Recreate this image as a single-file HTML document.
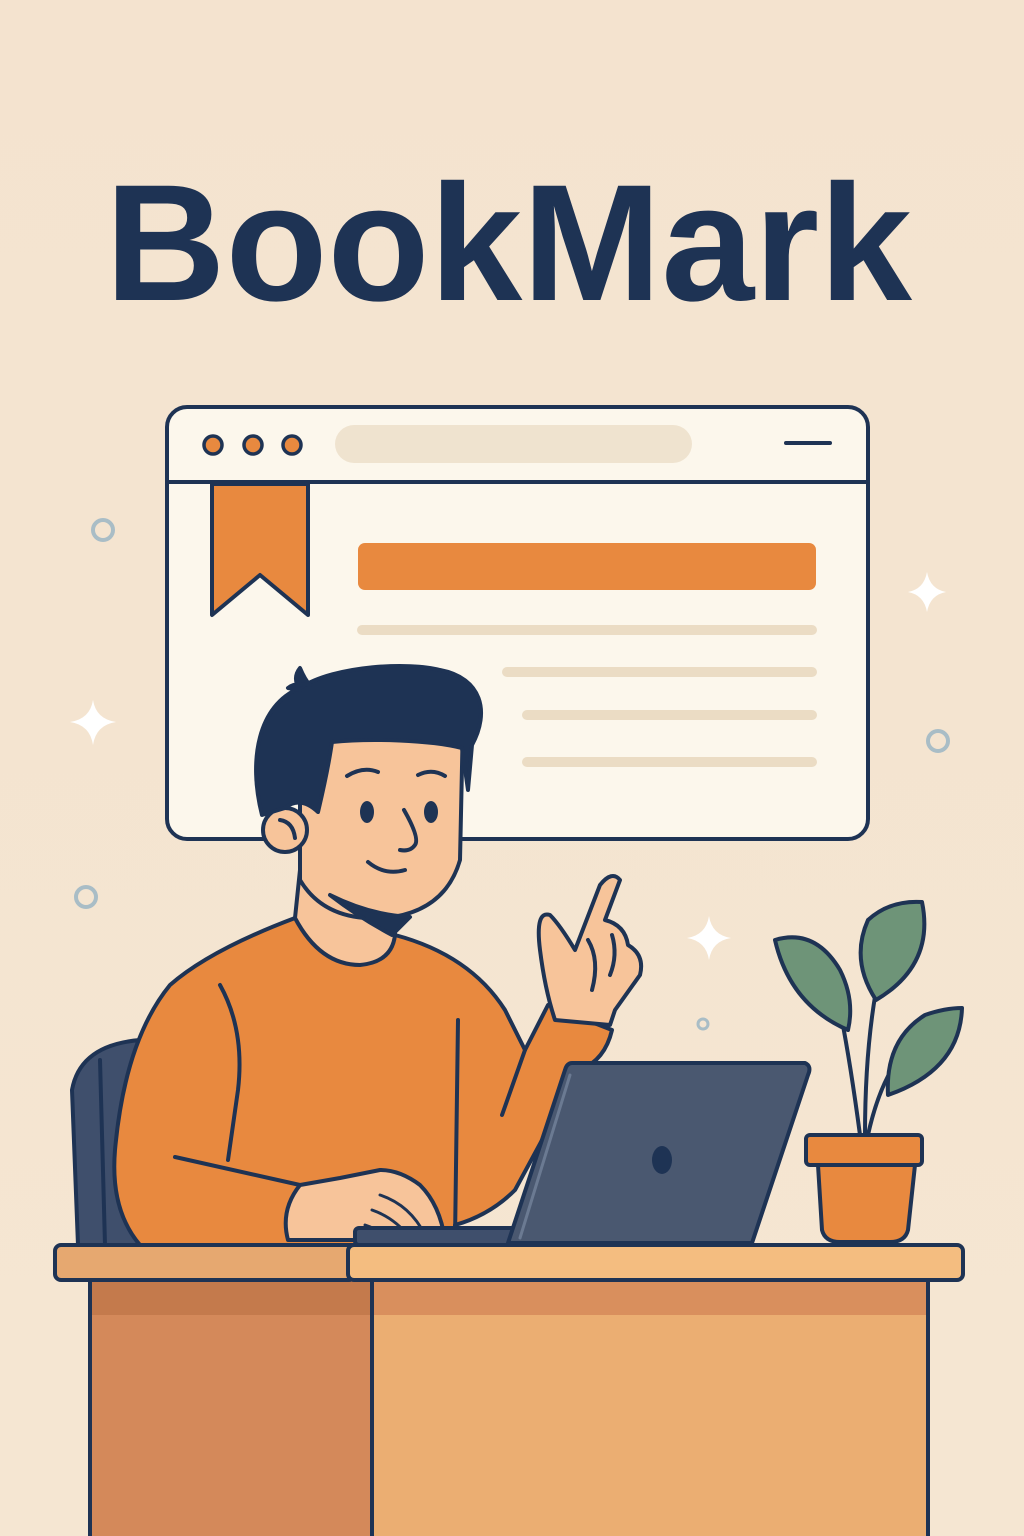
<!DOCTYPE html>
<html><head><meta charset="utf-8"><style>
html,body{margin:0;padding:0;background:#f5e5d1}
svg{display:block}
</style></head><body>
<svg width="1024" height="1536" viewBox="0 0 1024 1536" xmlns="http://www.w3.org/2000/svg">
<defs><linearGradient id="bg" x1="0" y1="0" x2="0" y2="1"><stop offset="0" stop-color="#f4e3cf"/><stop offset="1" stop-color="#f5e6d2"/></linearGradient></defs>
<rect width="1024" height="1536" fill="url(#bg)"/>
<text x="105" y="300" font-family="Liberation Sans, sans-serif" font-weight="bold" font-size="166" fill="#1e3354" textLength="807" lengthAdjust="spacingAndGlyphs">BookMark</text>

<g stroke="#1e3354" stroke-width="4" stroke-linejoin="round" stroke-linecap="round">
<rect x="167" y="407" width="701" height="432" rx="20" fill="#fcf7ec"/>
<line x1="169" y1="482" x2="866" y2="482"/>
<circle cx="213" cy="445" r="9" fill="#e8893f" stroke-width="3.5"/>
<circle cx="253" cy="445" r="9" fill="#e8893f" stroke-width="3.5"/>
<circle cx="292" cy="445" r="9" fill="#e8893f" stroke-width="3.5"/>
<line x1="786" y1="443" x2="830" y2="443"/>
<path d="M212 484 L308 484 L308 615 L260 575 L212 615 Z" fill="#e8893f"/>
</g>
<rect x="335" y="425" width="357" height="38" rx="19" fill="#efe3cf"/>
<rect x="358" y="543" width="458" height="47" rx="7" fill="#e8893f"/>
<g stroke="#ebdcc4" stroke-width="10" stroke-linecap="round">
<line x1="362" y1="630" x2="812" y2="630"/>
<line x1="507" y1="672" x2="812" y2="672"/>
<line x1="527" y1="715" x2="812" y2="715"/>
<line x1="527" y1="762" x2="812" y2="762"/>
</g>

<g fill="#fff">
<path d="M927 572 Q930 589 946 592 Q930 595 927 612 Q924 595 908 592 Q924 589 927 572Z"/>
<path d="M93 700 Q96 719 116 722 Q96 725 93 745 Q90 725 70 722 Q90 719 93 700Z"/>
<path d="M709 916 Q712 935 731 938 Q712 941 709 960 Q706 941 687 938 Q706 935 709 916Z"/>
</g>
<g fill="none" stroke="#a9bdc6" stroke-width="4">
<circle cx="103" cy="530" r="10"/><circle cx="938" cy="741" r="10"/><circle cx="86" cy="897" r="10"/><circle cx="703" cy="1024" r="5" stroke-width="3"/>
</g>

<g stroke="#1e3354" stroke-width="4" stroke-linejoin="round" stroke-linecap="round">
<path d="M140 1040 Q80 1045 72 1090 L78 1245 L140 1245 Z" fill="#3f4f6c"/>
<path d="M100 1060 L105 1245" fill="none"/>
<path d="M140 1245 Q110 1210 115 1150 Q125 1040 170 985 Q210 950 295 918 L395 935 Q470 955 505 1010 L525 1050 L548 1005 L612 1030 Q605 1060 580 1070 L515 1190 Q490 1215 455 1225 L455 1245 Z" fill="#e8893f"/>
<path d="M220 985 Q245 1030 238 1090 L228 1160" fill="none"/>
<path d="M458 1020 L455 1240" fill="none"/>
<path d="M525 1050 L502 1115" fill="none"/>
<path d="M300 870 L295 918 Q320 965 360 965 Q392 962 395 935 L395 900 Z" fill="#f7c49a"/>
<path d="M300 720 L300 880 Q325 922 385 918 Q445 912 460 860 L463 720 Z" fill="#f7c49a"/>
<path d="M330 895 Q360 918 392 935 Q402 925 410 917 Q370 915 330 895Z" fill="#1e3354"/>
<circle cx="285" cy="830" r="22" fill="#f7c49a"/>
<path d="M280 820 Q293 822 295 838" fill="none"/>
<path d="M262 815 C248 760 258 705 300 688 C335 665 410 662 440 670 C482 678 490 712 472 745 L468 790 L462 748 C430 740 370 738 332 742 C328 770 322 795 318 812 Q300 795 285 808 Z" fill="#1e3354"/>
<path d="M300 690 Q292 678 300 668 Q305 680 310 685 Q295 682 288 688Z" fill="#1e3354"/>
<path d="M347 776 Q363 766 378 772 M418 775 Q432 768 445 776" fill="none"/>
<ellipse cx="367" cy="812" rx="7" ry="11" fill="#1e3354" stroke="none"/>
<ellipse cx="431" cy="812" rx="7" ry="11" fill="#1e3354" stroke="none"/>
<path d="M404 810 Q420 838 415 845 Q410 852 400 850" fill="none"/>
<path d="M368 862 Q385 876 405 870" fill="none"/>
<path d="M555 1020 Q545 990 540 950 Q535 910 550 915 Q560 925 575 950 L600 885 Q612 870 620 880 L605 920 Q625 925 628 945 Q645 955 640 975 L615 1010 L610 1025 Z" fill="#f7c49a"/>
<path d="M588 940 Q600 960 592 990 M612 935 Q618 955 610 975" fill="none"/>
<path d="M175 1157 L300 1185" fill="none"/>
<path d="M300 1185 Q280 1210 288 1240 L445 1240 Q440 1205 420 1185 Q400 1170 380 1170 L340 1178 Z" fill="#f7c49a"/>
<path d="M380 1195 Q410 1205 425 1235 M372 1210 Q395 1218 410 1238 M365 1225 Q380 1230 390 1240" fill="none" stroke-width="3"/>
<rect x="355" y="1228" width="160" height="17" rx="4" fill="#3f4f6c"/>
<path d="M572 1063 L805 1063 Q812 1066 808 1075 L752 1243 L508 1243 L565 1070 Q567 1063 572 1063Z" fill="#4a5870"/>
<path d="M570 1075 L520 1238" stroke="#6b7a92" fill="none" stroke-width="3"/>
<ellipse cx="662" cy="1160" rx="10" ry="14" fill="#1e3354" stroke="none"/>
<path d="M860 1135 Q850 1060 840 1010 M865 1135 Q865 1040 880 970 M868 1135 Q880 1080 905 1050" fill="none"/>
<path d="M848 1030 Q790 1005 775 940 Q815 928 840 970 Q855 1000 848 1030Z" fill="#6e9478"/>
<path d="M876 1000 Q850 960 868 920 Q890 900 922 902 Q935 965 876 1000Z" fill="#6e9478"/>
<path d="M888 1095 Q885 1040 925 1015 Q945 1008 962 1008 Q960 1070 888 1095Z" fill="#6e9478"/>
<path d="M818 1165 L915 1165 L908 1230 Q905 1242 890 1242 L840 1242 Q825 1242 822 1230Z" fill="#e8893f"/>
<rect x="806" y="1135" width="116" height="30" rx="4" fill="#e8893f"/>
<rect x="90" y="1278" width="282" height="270" fill="#d4895a"/>
<rect x="372" y="1278" width="556" height="270" fill="#ebae72"/>
</g>
<rect x="92" y="1282" width="278" height="33" fill="#c47a4c"/>
<rect x="374" y="1282" width="552" height="33" fill="#d98f5d"/>
<g stroke="#1e3354" stroke-width="4" stroke-linejoin="round">
<rect x="55" y="1245" width="300" height="35" rx="6" fill="#e6a870"/>
<rect x="348" y="1245" width="615" height="35" rx="6" fill="#f4bd80"/>
</g>
</svg>
</body></html>
